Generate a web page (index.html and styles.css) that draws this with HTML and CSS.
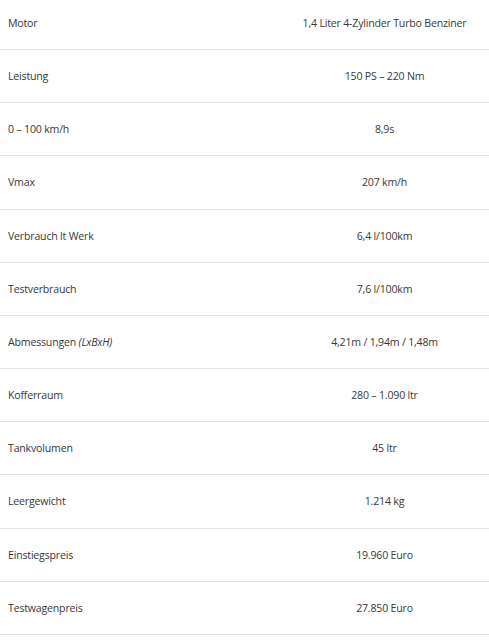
FILE: index.html
```html
<!DOCTYPE html>
<html lang="de">
<head>
<meta charset="utf-8">
<title>Technische Daten</title>
<link rel="stylesheet" href="styles.css">
</head>
<body>
<table class="specs">
  <tbody>
    <tr><td class="label">Motor</td><td class="value">1,4 Liter 4-Zylinder Turbo Benziner</td></tr>
    <tr><td class="label">Leistung</td><td class="value">150 PS – 220 Nm</td></tr>
    <tr><td class="label">0 – 100 km/h</td><td class="value">8,9s</td></tr>
    <tr><td class="label">Vmax</td><td class="value">207 km/h</td></tr>
    <tr><td class="label">Verbrauch lt Werk</td><td class="value">6,4 l/100km</td></tr>
    <tr><td class="label">Testverbrauch</td><td class="value">7,6 l/100km</td></tr>
    <tr><td class="label">Abmessungen <em>(LxBxH)</em></td><td class="value">4,21m / 1,94m / 1,48m</td></tr>
    <tr><td class="label">Kofferraum</td><td class="value">280 – 1.090 ltr</td></tr>
    <tr><td class="label">Tankvolumen</td><td class="value">45 ltr</td></tr>
    <tr><td class="label">Leergewicht</td><td class="value">1.214 kg</td></tr>
    <tr><td class="label">Einstiegspreis</td><td class="value">19.960 Euro</td></tr>
    <tr><td class="label">Testwagenpreis</td><td class="value">27.850 Euro</td></tr>
  </tbody>
</table>
</body>
</html>
```
FILE: styles.css
```css
html, body {
  margin: 0;
  padding: 0;
  background: #ffffff;
}
body {
  font-family: "Open Sans", "Liberation Sans", sans-serif;
  font-size: 10.6px;
  letter-spacing: -0.2px;
  color: #383838;
  overflow: hidden;
}
.specs {
  width: 100%;
  border-collapse: collapse;
  margin-top: -3px;
}
.specs td {
  padding: 17px 0;
  line-height: 18.15px;
  border-bottom: 1px solid #e3e3e3;
  vertical-align: middle;
}
.specs .label {
  width: 272px;
  padding-left: 8px;
  text-align: left;
}
.specs .value {
  text-align: center;
}
.specs em {
  font-style: italic;
}
```
